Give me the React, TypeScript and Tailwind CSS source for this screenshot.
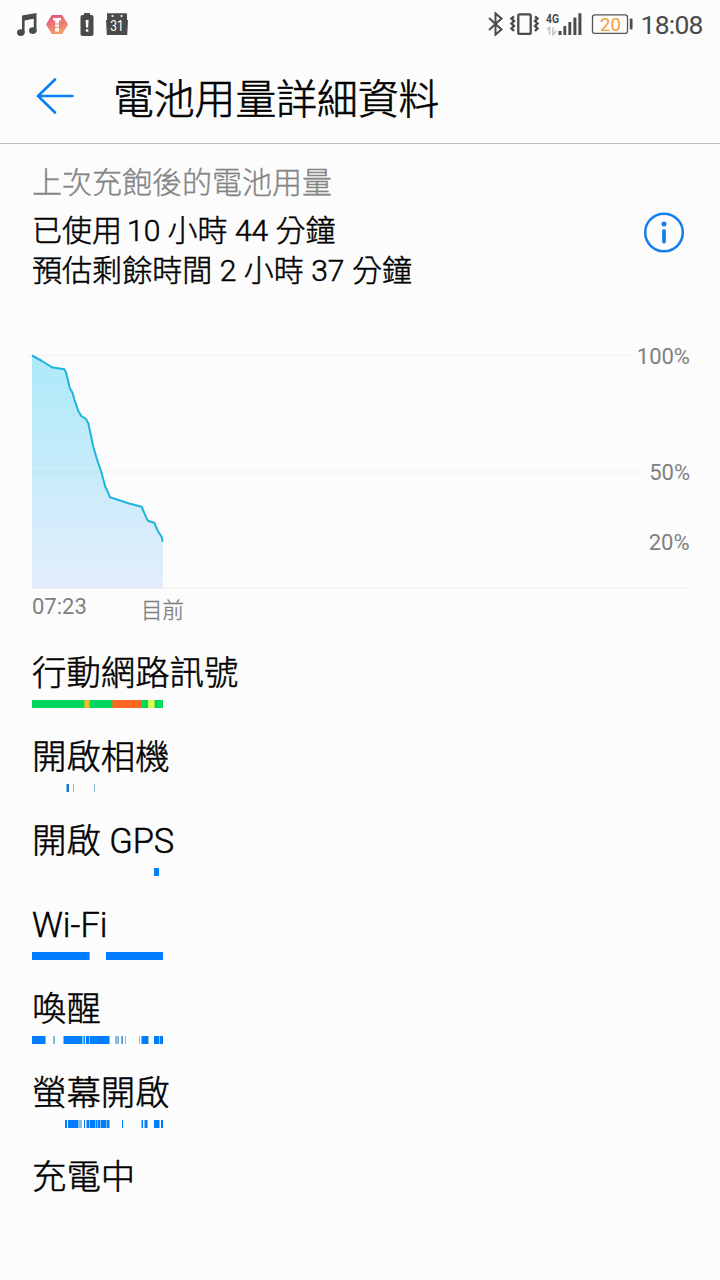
import React from 'react';

type Segment = [start: number, end: number, color: string];

const BLUE = '#007dff';
const PALE = '#8abfdc';
const MID = '#3f9be8';
const GREEN = '#00d75b';

const usage: { label: string; segments: Segment[] }[] = [
  {
    label: '行動網路訊號',
    segments: [
      [0, 52, GREEN], [52, 53, '#a8c23a'], [53, 57, '#f4c020'], [57, 58, '#a8b62f'], [58, 80, GREEN],
      [80, 81, '#a98f3c'], [81, 109, '#ff6622'], [109, 110, '#a98f3c'], [110, 116, GREEN],
      [116, 122, '#d6ff4f'], [122, 123, '#7adf55'], [123, 131, GREEN],
    ],
  },
  { label: '開啟相機', segments: [[34, 35, PALE], [35, 37, '#1673d1'], [41, 42, PALE], [62, 63, PALE]] },
  { label: '開啟 GPS', segments: [[122, 127, BLUE]] },
  { label: 'Wi-Fi', segments: [[0, 57, BLUE], [57, 58, '#62aff5'], [74, 131, BLUE]] },
  {
    label: '喚醒',
    segments: [
      [0, 13, BLUE], [13, 14, PALE], [21, 23, PALE], [31, 32, PALE], [32, 50, BLUE], [50, 52, PALE],
      [52, 53, BLUE], [54, 57, BLUE], [57, 58, PALE], [58, 77, BLUE], [77, 78, PALE],
      [83, 87, PALE], [89, 90, PALE], [90, 91, MID], [93, 94, PALE], [107, 108, PALE], [109, 110, PALE],
      [110, 116, BLUE], [116, 117, PALE], [122, 127, BLUE], [127, 128, PALE], [128, 131, BLUE],
    ],
  },
  {
    label: '螢幕開啟',
    segments: [
      [33, 35, BLUE], [36, 46, BLUE], [46, 50, PALE], [52, 53, BLUE], [54, 55, PALE], [55, 57, BLUE],
      [57, 58, PALE], [58, 63, BLUE], [63, 64, PALE], [64, 65, BLUE], [65, 66, PALE], [66, 68, BLUE],
      [68, 69, PALE], [69, 74, BLUE], [74, 75, PALE], [75, 77, BLUE], [77, 78, PALE], [90, 91, BLUE],
      [109, 110, PALE], [110, 111, BLUE], [112, 113, PALE], [113, 115, BLUE], [115, 116, PALE],
      [122, 127, BLUE], [127, 128, PALE], [129, 131, BLUE],
    ],
  },
  { label: '充電中', segments: [] },
];

function StatusBar() {
  return (
    <div className="flex h-12 justify-between">
      <svg width="150" height="48" viewBox="0 0 150 48" fill="#4a4a4a">
        <path d="M22 15.5 36.5 13V31H33.8V18.8L24.6 20.4V33H22Z" />
        <ellipse cx="20.8" cy="32.6" rx="3.8" ry="3.4" />
        <ellipse cx="32.8" cy="30.6" rx="3.8" ry="3.4" />
        <defs>
          <linearGradient id="hex" x1="0" y1="0" x2="0.4" y2="1">
            <stop offset="0" stopColor="#dd4f80" />
            <stop offset="1" stopColor="#f59a68" />
          </linearGradient>
        </defs>
        <path d="M51.8 15H62.2L68 24.5 62.2 34H51.8L46 24.5Z" fill="url(#hex)" />
        <path d="M53 18H61V20.5H59V31.5H55.2V20.5H53Z" fill="#fff" />
        <path d="M54.8 24H59.3M54.8 27.2H59.3" stroke="#e77872" strokeWidth="1" />
        <path d="M84 13H90V15H84Z" />
        <rect x="80.5" y="15" width="13" height="21" rx="2" />
        <path d="M85.6 20H88.6L88.2 27.6H86Z" fill="#fff" />
        <rect x="85.8" y="29.2" width="2.5" height="2.5" fill="#fff" />
        <path d="M107 13.3H127V20H128L127.2 35H106.8L106 20H107Z" />
        <circle cx="112.5" cy="16" r="1.1" fill="#fff" />
        <circle cx="121.5" cy="16" r="1.1" fill="#fff" />
        <text x="117" y="31" textAnchor="middle" fill="#fff" fontSize="14" fontFamily="Roboto, sans-serif" textLength="13.5" lengthAdjust="spacingAndGlyphs">31</text>
      </svg>
      <svg width="240" height="48" viewBox="0 0 240 48" fill="#4a4a4a">
        <path d="M9 18 21.5 29.5 15.5 34.5V13.5L21.5 18.5 9 30" fill="none" stroke="#4a4a4a" strokeWidth="2" />
        <rect x="38.3" y="14.3" width="12.4" height="19.6" rx="1.5" fill="none" stroke="#4a4a4a" strokeWidth="2.3" />
        <path d="M34 16.5 31.5 18.5 34 21 31.5 23.5 34 26 31.5 28.5 34 31M55 16.5 57.5 18.5 55 21 57.5 23.5 55 26 57.5 28.5 55 31" fill="none" stroke="#4a4a4a" strokeWidth="2.4" />
        <text x="66" y="22.8" fontSize="13" fontWeight="700" fontFamily="Roboto, sans-serif" textLength="13" lengthAdjust="spacingAndGlyphs">4G</text>
        <path d="M67 29.5 69.5 27.5V34.5M73 27.5V34.5L76.5 31" fill="none" stroke="#c4c4c4" strokeWidth="1.6" />
        <path d="M78.5 31H81.5V35H78.5ZM83.4 26H86.2V35H83.4ZM88.4 22H91.2V35H88.4ZM93.4 17.5H96.4V35H93.4ZM98.4 13.3H101.4V35H98.4Z" />
        <rect x="112.5" y="14.8" width="35" height="18.6" rx="2.5" fill="none" stroke="#555" strokeWidth="1.3" />
        <rect x="149.8" y="18.5" width="2.7" height="11" rx="1" />
        <text x="130.5" y="31" textAnchor="middle" fill="#f0a040" fontSize="18.5" fontFamily="Roboto, sans-serif">20</text>
        <text x="160.5" y="34" fontSize="26.5" fontFamily="Roboto, sans-serif" textLength="63" lengthAdjust="spacing">18:08</text>
      </svg>
    </div>
  );
}

function BatteryChart() {
  const line =
    'M32 355.5 42 361 51.7 367.2 64.3 369.3 66 372.3 69.7 387.7 72.7 393.3 74.3 399.3 78.3 411 81.3 416 86 419 88.3 423.3 93.3 446.7 97.7 461.7 101 471 105.3 486.7 108 492.3 110 497.3 130 503.7 141.7 506.7 144 512.3 147.7 520.7 154.3 522.7 157.3 530 161.7 537 162.7 541.7';
  return (
    <svg className="-ml-8 block" width="720" height="300" viewBox="0 330 720 300" fontFamily="Roboto, 'Noto Sans CJK TC', sans-serif" fontSize="22" fill="#808080">
      <defs>
        <linearGradient id="area" x1="0" y1="0" x2="0" y2="1">
          <stop offset="0" stopColor="#aceaf9" />
          <stop offset="1" stopColor="#e3edfb" />
        </linearGradient>
      </defs>
      <path d={`${line}L163 542V588H32Z`} fill="url(#area)" />
      <path d="M28 355.5H632M28 472H645M28 588H688" stroke="#000" strokeOpacity="0.035" strokeWidth="1.3" />
      <path d={line} fill="none" stroke="#1fb4dc" strokeWidth="2" strokeLinejoin="round" />
      <text x="690" y="363.5" textAnchor="end">100%</text>
      <text x="690" y="480" textAnchor="end">50%</text>
      <text x="689.5" y="549.5" textAnchor="end">20%</text>
      <text x="32" y="614">07:23</text>
      <text x="141" y="617.5" fontWeight="300" fontSize="21.5" stroke="#808080" strokeWidth="0.35">目前</text>
    </svg>
  );
}

export default function App() {
  return (
    <div className="h-[1280px] w-[720px] overflow-hidden bg-[#fcfcfc] font-[Roboto,'Noto_Sans_CJK_TC',sans-serif] text-black">
      <StatusBar />
      <header className="flex h-24 items-center border-b border-[#bdbdbd] pl-8">
        <svg width="48" height="48" viewBox="0 0 48 48" fill="none" stroke="#087ff0" strokeWidth="2.6" strokeLinecap="round">
          <path d="M6 24H40.5M23 7.5 6 24 23 40.5" />
        </svg>
        <h1 className="ml-[33px] pt-[9px] text-[40.8px] leading-[60px] font-light [-webkit-text-stroke:0.6px_black]">電池用量詳細資料</h1>
      </header>
      <main className="px-8">
        <section className="flex h-[186px] justify-between">
          <div className="pt-[19px] font-light">
            <p className="text-[30px] leading-[40px] text-[#858585] [-webkit-text-stroke:0.35px_#858585]">上次充飽後的電池用量</p>
            <p className="mt-2 text-[30px] leading-[40px] [-webkit-text-stroke:0.5px_black]">已使用<span className="ml-[5px]">10</span> 小時 44 分鐘</p>
            <p className="text-[30px] leading-[40px] tracking-[0.05px] [-webkit-text-stroke:0.5px_black]">預估剩餘時間 2 小時 37 分鐘</p>
          </div>
          <svg className="mt-[66px] mr-1" width="44" height="44" viewBox="0 0 44 44">
            <circle cx="24" cy="22.5" r="18.8" fill="none" stroke="#147fe8" strokeWidth="2.5" />
            <circle cx="24" cy="14" r="2.5" fill="#147fe8" />
            <path d="M24 21V31.5" stroke="#147fe8" strokeWidth="3.8" strokeLinecap="round" />
          </svg>
        </section>
        <BatteryChart />
        <section className="pt-[23px]">
          {usage.map(({ label, segments }) => (
            <div key={label} className="h-[84px]">
              <h2 className="h-[47px] text-[34.4px] leading-10 font-light whitespace-nowrap [-webkit-text-stroke:0.5px_black]">{label}</h2>
              <svg className="block" width="131" height="8" viewBox="0 0 131 8" shapeRendering="crispEdges">
                {segments.map(([start, end, color]) => (
                  <rect key={start} x={start} width={end - start} height="8" fill={color} />
                ))}
              </svg>
            </div>
          ))}
        </section>
      </main>
    </div>
  );
}
